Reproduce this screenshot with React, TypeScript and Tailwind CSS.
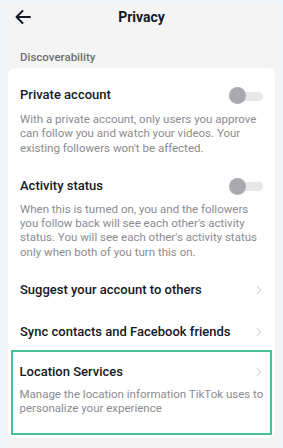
import { ChevronRight } from "lucide-react";

function Toggle() {
  return (
    <div className="relative mt-[1px] h-[18px] w-[34px] shrink-0">
      <div className="absolute left-[8px] top-[4.5px] h-[9px] w-[26px] rounded-full bg-[#e7e7e9]" />
      <div className="absolute left-0 top-0 h-[17px] w-[17px] rounded-full bg-[#a9a9ae]" />
    </div>
  );
}

function Chevron() {
  return <ChevronRight size={14} strokeWidth={1.5} className="shrink-0 text-[#b3b3b8]" />;
}

export default function App() {
  return (
    <div
      className="h-[448px] w-[283px] overflow-hidden bg-[#eef4f8] px-[3px] pt-[3px]"
      style={{ fontFamily: "Roboto, 'Noto Sans', sans-serif" }}
    >
      <div className="h-full bg-[#f4f4f4]">
        <header className="relative flex h-[28px] items-center justify-center">
          <svg
            className="absolute left-[12px] top-[7px]"
            width="16"
            height="14"
            viewBox="0 0 16 14"
            fill="none"
            stroke="#161823"
            strokeWidth="1.9"
            strokeLinecap="round"
            strokeLinejoin="round"
          >
            <path d="M15 7H1.5M7.5 1L1.5 7l6 6" />
          </svg>
          <h1 className="text-[14px] font-bold text-[#161823]">Privacy</h1>
        </header>

        <p className="mt-[19px] pl-[17px] text-[11.5px] leading-[14px] font-medium text-[#707070]">
          Discoverability
        </p>

        <div className="mx-[5px] mt-[4px] rounded-[7px] bg-white pb-[3px]">
          <div className="px-[12px] pt-[18px]">
            <div className="flex items-start justify-between">
              <h2 className="text-[13px] leading-[18px] font-medium text-[#161823]">Private account</h2>
              <Toggle />
            </div>
            <p className="mt-[7px] text-[11.5px] leading-[14.3px] text-[#8b8b90]">
              With a private account, only users you approve can follow you and watch your videos. Your
              existing followers won't be affected.
            </p>
          </div>

          <div className="px-[12px] pt-[22px]">
            <div className="flex items-start justify-between">
              <h2 className="text-[13px] leading-[18px] font-medium text-[#161823]">Activity status</h2>
              <Toggle />
            </div>
            <p className="mt-[6px] text-[11.5px] leading-[14.3px] text-[#8b8b90]">
              When this is turned on, you and the followers you follow back will see each other's activity
              status. You will see each other's activity status only when both of you turn this on.
            </p>
          </div>

          <div className="flex items-center justify-between pl-[12px] pr-[9px] pt-[22px]">
            <h2 className="text-[13px] leading-[18px] font-medium text-[#161823]">
              Suggest your account to others
            </h2>
            <Chevron />
          </div>

          <div className="flex items-center justify-between pl-[12px] pr-[9px] pt-[24px]">
            <h2 className="text-[13px] leading-[18px] font-medium text-[#161823]">
              Sync contacts and Facebook friends
            </h2>
            <Chevron />
          </div>

          <div className="mx-[3px] mt-[9px] border-[2.5px] border-[#46c19b] pb-[18px] pl-[6.5px] pr-[4px] pt-[10.5px]">
            <div className="flex items-center justify-between">
              <h2 className="text-[13px] leading-[18px] font-medium text-[#161823]">Location Services</h2>
              <Chevron />
            </div>
            <p className="mt-[6px] text-[11.5px] leading-[14px] text-[#8b8b90]">
              Manage the location information TikTok uses to personalize your experience
            </p>
          </div>
        </div>
      </div>
    </div>
  );
}
